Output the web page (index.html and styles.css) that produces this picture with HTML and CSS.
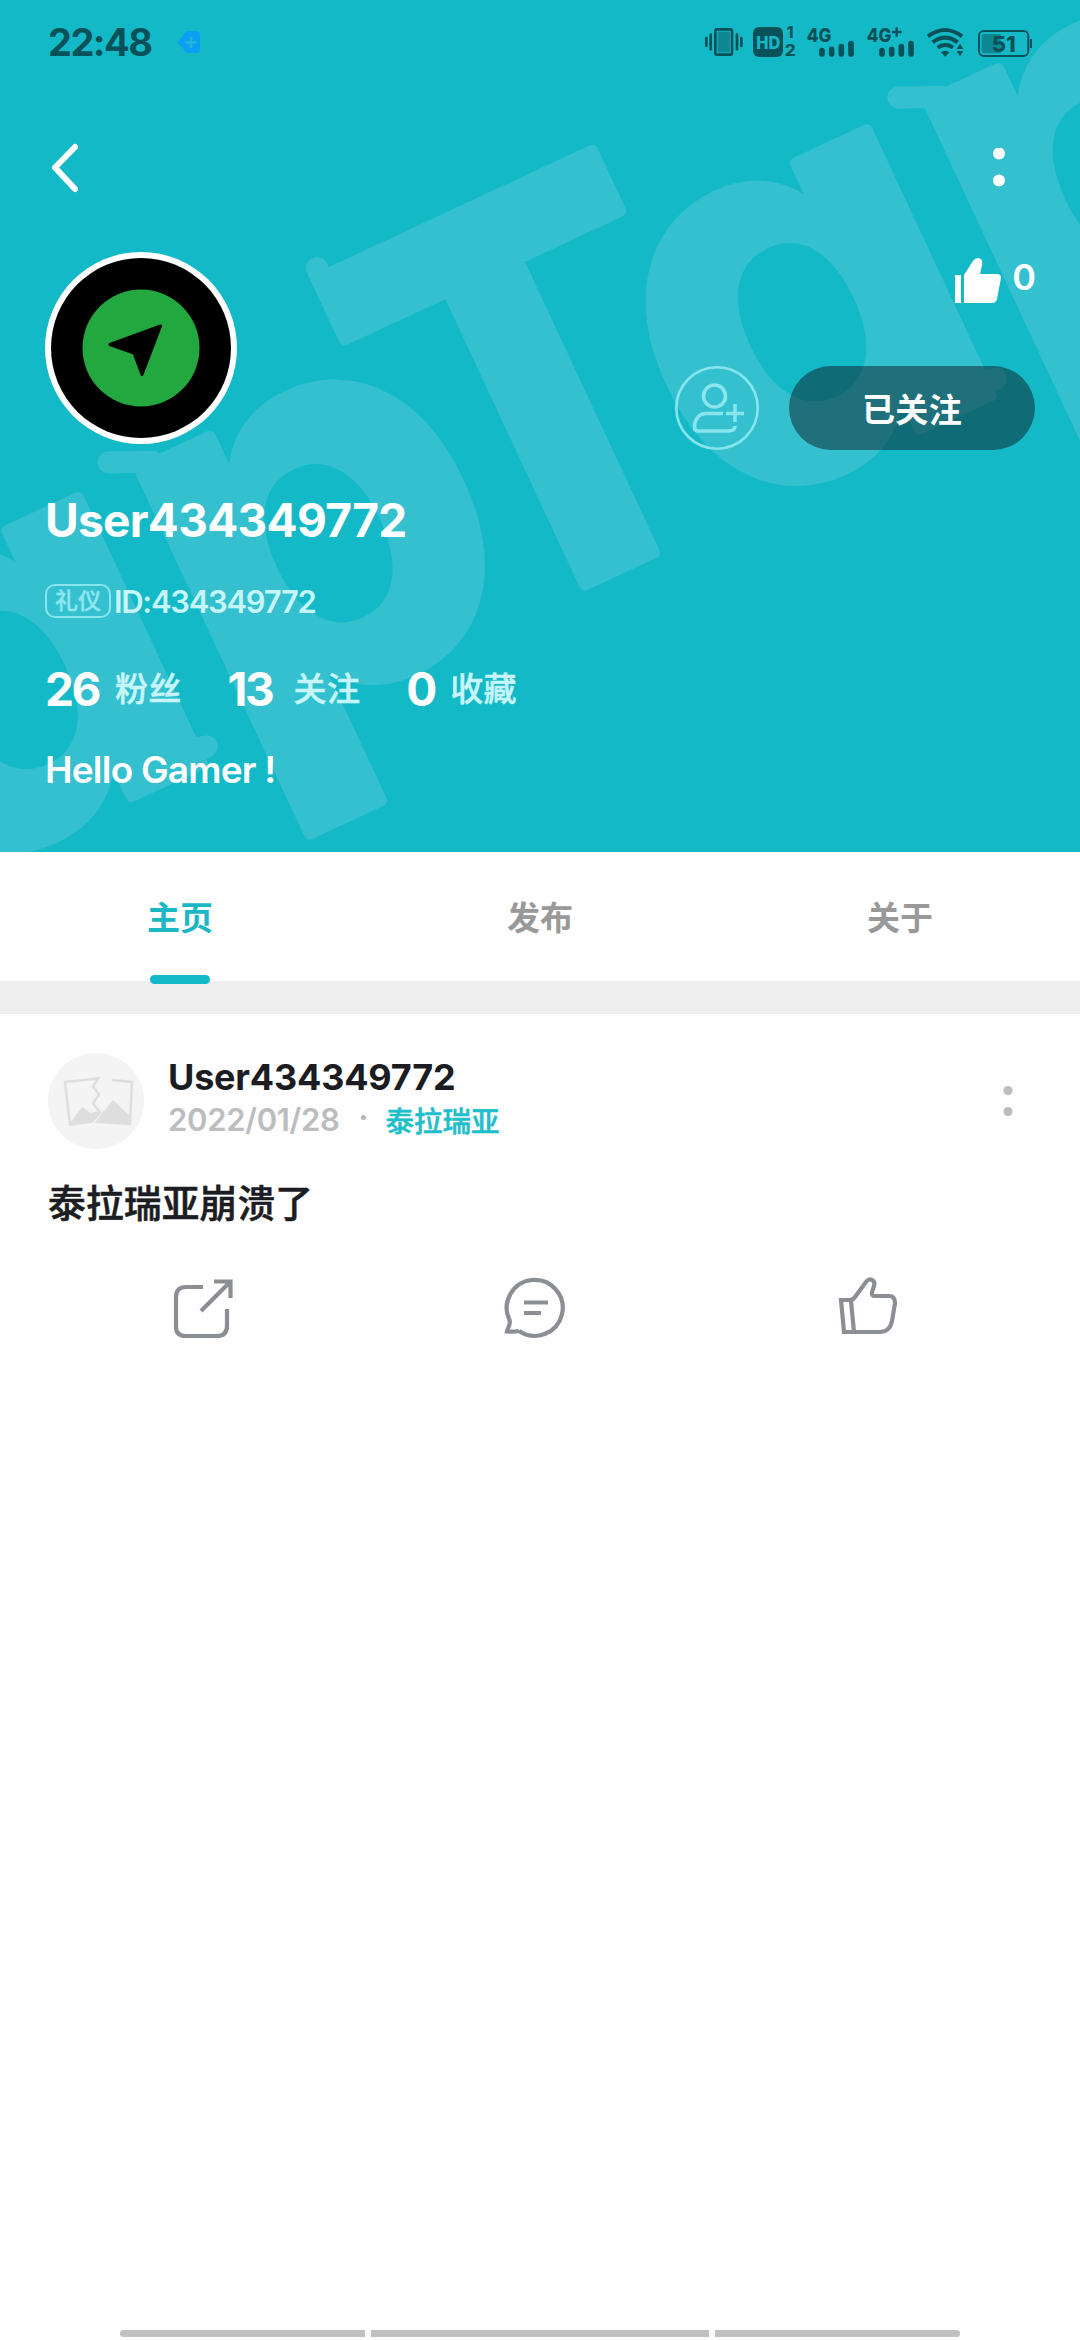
FILE: index.html
```html
<!DOCTYPE html>
<html lang="zh-CN">
<head>
<meta charset="utf-8">
<title>User434349772</title>
<link rel="stylesheet" href="styles.css">
</head>
<body>
<div class="screen">
  <header class="profile">
    <svg class="watermark" viewBox="0 0 1080 852" aria-hidden="true">
      <g transform="rotate(-25)">
        <text y="777" x="-444">a</text>
        <text y="777" x="-105">p</text>
        <text y="777" x="150" transform="translate(7 0) scale(.955 1)">T</text>
        <text y="777" x="426">a</text>
        <text y="777" x="765">p</text>
        <path class="swash" d="M174 377V440M200 398l-26 20M-97 465l40 18M773 468l40 18M-166 730q8 26 38 34h-50M704 730q8 26 38 34h-50"/>
      </g>
    </svg>
    <div class="statusbar">
      <span class="clock">22:48</span>
      <svg class="badge" width="22" height="22" viewBox="0 0 22 22"><path d="M9 0h9a4 4 0 0 1 4 4v14a4 4 0 0 1-4 4H9L1 13q-2-2 0-4z" fill="#0a9ff2"/><path d="M13 6v11M7.500 11.500h11" stroke="#25b6cf" stroke-width="2.600"/></svg>
      <div class="status-icons">
        <svg width="38" height="32" viewBox="75 78 114 96"><rect x="106" y="88" width="50" height="76" rx="5" fill="#14b9c8" stroke="#075158" stroke-width="8"/><rect x="113" y="95" width="36" height="62" fill="#0d8791"/><path d="M79 114v24M92 104v44M171 104v44M184 114v24" stroke="#075158" stroke-width="8" stroke-linecap="round"/></svg>
        <svg width="44" height="32" viewBox="219 78 132 96"><rect x="219" y="81" width="90" height="90" rx="18" fill="#075158"/><text x="229" y="146" class="st hd" textLength="72" lengthAdjust="spacingAndGlyphs">HD</text><text x="320" y="114" class="st" font-size="46">1</text><text x="314" y="168" class="st" font-size="46" textLength="33" lengthAdjust="spacingAndGlyphs">2</text></svg>
        <svg width="50" height="32" viewBox="381 78 150 96"><text x="380" y="125" class="st" font-size="58" textLength="74" lengthAdjust="spacingAndGlyphs">4G</text><path d="M426 152v10M455 148v14M484 140v22M513 131v31" class="bars"/></svg>
        <svg width="50" height="32" viewBox="561 78 150 96"><text x="560" y="125" class="st" font-size="58" textLength="74" lengthAdjust="spacingAndGlyphs">4G</text><path d="M650 82v28M636 96h29" stroke="#075158" stroke-width="7"/><path d="M606 152v10M635 148v14M664 140v22M693 131v31" class="bars"/></svg>
        <svg width="41" height="32" viewBox="741 78 123 96"><path d="M744 109q51-38 102 0M758 127q37-28 75 0M773 143q23-17 46 0" fill="none" stroke="#075158" stroke-width="12"/><path d="M783 157q12-9 25 0l-12 13zM830 147l10-16 10 16zM830 153l10 16 10-16z" fill="#075158"/></svg>
        <svg width="57" height="32" viewBox="894 78 171 96"><rect x="897" y="93" width="148" height="75" rx="15" fill="none" stroke="#075158" stroke-width="6"/><path d="M915 102h47v58h-47q-10 0-10-10v-38q0-10 10-10z" fill="#0d8791"/><path d="M1053 117v27" stroke="#075158" stroke-width="6"/><text x="935" y="155" class="st" font-size="66" textLength="72" lengthAdjust="spacingAndGlyphs">51</text></svg>
      </div>
    </div>
    <nav class="topnav">
      <svg width="30" height="50" viewBox="0 0 30 50"><path d="M27 4 7 24.500 27 46" fill="none" stroke="#fff" stroke-width="6" stroke-linecap="round" stroke-linejoin="round"/></svg>
      <svg width="12" height="40" viewBox="0 0 12 40"><circle cx="6" cy="5.500" r="6"/><circle cx="6" cy="32.500" r="6"/></svg>
    </nav>
    <div class="identity">
      <svg class="avatar" width="192" height="192" viewBox="0 0 192 192"><circle cx="96" cy="96" r="96" fill="#fff"/><circle cx="96" cy="96" r="90" fill="#000"/><circle cx="96" cy="96" r="58.500" fill="#22a83f"/><path d="M65 92.500 115.500 74 97 122.500 89 101z" stroke="#000" stroke-width="3" stroke-linejoin="round"/></svg>
      <div class="actions">
        <div class="likes">
          <svg width="46" height="46" viewBox="0 0 46 46"><path d="M0 17h6v28H0zM9 17 18 3q2-3 5-3c4 0 5 4 4 7l-2 9h17q4 0 4 4l-4 21q-1 4-5 4H9z"/></svg>
          <span>0</span>
        </div>
        <div class="buttons">
          <svg width="84" height="84" viewBox="0 0 84 84" fill="none" stroke="#88e5ee"><circle cx="42" cy="42" r="40.700" stroke-width="2.600"/><g stroke-width="3.600"><circle cx="39.500" cy="30" r="11"/><path d="M48 47.500H31C23 47.500 19.500 55 19.500 61q0 4 4 4H53q7 0 7-5"/><path d="M60 38v18M51 47.500h18"/></g></svg>
          <button class="follow">已关注</button>
        </div>
      </div>
    </div>
    <h1 class="name">User434349772</h1>
    <div class="idrow"><span class="tag">礼仪</span><span class="uid">ID:434349772</span></div>
    <div class="stats">
      <div class="stat"><b class="n26">26</b><span>粉丝</span></div>
      <div class="stat"><b class="n13">13</b><span>关注</span></div>
      <div class="stat"><b class="n0">0</b><span>收藏</span></div>
    </div>
    <p class="bio">Hello Gamer !</p>
  </header>
  <div class="tabs">
    <div class="tab active">主页</div>
    <div class="tab">发布</div>
    <div class="tab">关于</div>
  </div>
  <div class="divider"></div>
  <article class="post">
    <div class="post-head">
      <svg class="thumb" width="96" height="96" viewBox="0 0 96 96"><circle cx="48" cy="48" r="48" fill="#f4f4f4"/><path d="M17 29 50 25.500l-5 8 6 8-6 9 7 9-8 9-22 3z" fill="none" stroke="#dedede" stroke-width="2.500"/><path d="M22 70 34 54l8 6 10-2-8 10zM49 69l10-15 6-7 17 16v8z" fill="#dedede"/><path d="M64 27l20 2-2 42-33-2 8-11" fill="none" stroke="#dedede" stroke-width="2.500"/></svg>
      <div class="author">
        <div class="author-name">User434349772</div>
        <div class="meta"><span class="date">2022/01/28</span><i class="sep"></i><a class="game">泰拉瑞亚</a></div>
      </div>
      <svg class="more" width="10" height="32" viewBox="0 0 10 32"><circle cx="5" cy="5.500" r="4.600"/><circle cx="5" cy="26.500" r="4.600"/></svg>
    </div>
    <p class="body">泰拉瑞亚崩溃了</p>
    <div class="post-actions">
      <svg width="60" height="60" viewBox="0 0 60 60"><path d="M30 11H13Q3 11 3 21v30Q3 60 13 60H44Q54 60 54 50V33M41 5.500H57.500V22M57 6 28 35"/></svg>
      <svg width="62" height="62" viewBox="3 0 62 62"><path d="M17 55A28 28 0 1 0 7.500 44C9 48 6 51 5 55.500Q12 56 17 55M22 26.500h24M22 37h17"/></svg>
      <svg width="60" height="60" viewBox="0 0 60 60"><path d="M3 24H12Q15 24 17 21L28 6C31 1 38 4 36 10L34 16Q33 20 37 20H51Q57 20 57 27L54 45Q52 56 41 56H6zM13 25l3 31"/></svg>
    </div>
  </article>
  <footer class="gesture"><i></i><i class="mid"></i><i></i></footer>
</div>
</body>
</html>
```
FILE: styles.css
```css
* { box-sizing: border-box; margin: 0; padding: 0; }
body { background: #fefefe; font-family: Inter, "Noto Sans CJK SC", sans-serif; }
.screen { width: 1080px; height: 2340px; display: flex; flex-direction: column; overflow: hidden; }
svg { display: block; flex: none; }

.profile { position: relative; height: 852px; background: #14b9c8; color: #fff; overflow: hidden; isolation: isolate; }
.watermark { position: absolute; inset: 0; z-index: -1; width: 1080px; height: 852px; }
.watermark text { font: 700 536px Inter, sans-serif; font-feature-settings: "cv11"; fill: #34c0cf; stroke: #34c0cf; stroke-width: 12; stroke-linejoin: round; }
.swash { fill: none; stroke: #34c0cf; stroke-width: 22; stroke-linecap: round; stroke-linejoin: round; }

.statusbar { display: flex; align-items: center; height: 84px; padding: 0 45px 0 48px; }
.clock { color: #075158; font-size: 38px; font-weight: 700; width: 130px; letter-spacing: -1.5px; }
.status-icons { margin-left: auto; display: flex; gap: 10px; }
.st { font-family: Inter, sans-serif; font-weight: 800; fill: #075158; }
.hd { font-size: 50px; fill: #14b9c8; }
.bars { fill: none; stroke: #075158; stroke-width: 17; stroke-linecap: round; }

.topnav { display: flex; justify-content: space-between; align-items: center; height: 168px; padding: 0 75px 0 48px; }
.topnav circle, .likes svg { fill: #fff; }

.identity { display: flex; justify-content: space-between; height: 198px; padding: 0 45px; }
.actions { display: flex; flex-direction: column; justify-content: space-between; align-items: flex-end; padding-top: 6px; }
.likes { display: flex; gap: 11px; font-size: 36px; font-weight: 600; line-height: 38px; letter-spacing: -1px; }
.buttons { display: flex; gap: 30px; }
.follow { width: 246px; height: 84px; border: 0; border-radius: 42px; background: rgba(9, 31, 38, .5); color: #fff; font: 700 33px "Noto Sans CJK SC", sans-serif; letter-spacing: .3px; }

.name { height: 56px; line-height: 54px; margin: 43px 45px 0; font-size: 46px; font-weight: 700; letter-spacing: -.7px; }
.idrow { display: flex; align-items: center; gap: 3px; height: 34px; margin: 35px 45px 0; }
.tag { width: 66px; height: 34px; border: 2px solid #88e5ee; border-radius: 10px; color: #8ee6ef; font-size: 23px; font-weight: 500; -webkit-text-stroke: .4px; line-height: 31px; text-align: center; }
.uid { font-size: 31px; font-weight: 600; color: #c6f6fb; letter-spacing: -1.300px; }
.stats { display: flex; height: 50px; margin: 46px 45px 0; line-height: 50px; }
.stat { display: flex; }
.stat b { font-size: 46px; font-weight: 700; letter-spacing: -2.500px; }
.stat span { font-size: 33px; font-weight: 500; color: #c6f6fb; -webkit-text-stroke: .5px; letter-spacing: .3px; }
.n26 { width: 70px; }
.stat .n13 { width: 66px; }
.stat .n0 { width: 44px; }
.stat + .stat { margin-left: 46px; }
.bio { height: 46px; line-height: 46px; margin: 33px 45px 0; font-size: 37px; font-weight: 600; letter-spacing: -.8px; }

.tabs { display: grid; grid-template: 129px / repeat(3, 1fr); background: #fff; }
.tab { position: relative; text-align: center; font-size: 33px; font-weight: 700; line-height: 133px; color: #999; }
.active { color: #1bb7c5; }
.active::after { content: ""; position: absolute; left: 150px; bottom: -3px; width: 60px; height: 9px; border-radius: 5px; background: #14b9c8; z-index: 1; }
.divider { height: 33px; background: #eee; }

.post { padding: 39px 48px 0; flex: 1; }
.post-head { display: flex; align-items: center; height: 96px; }
.author { margin-left: 24px; padding-bottom: 7px; flex: 1; }
.author-name { font-size: 36px; font-weight: 700; line-height: 44px; color: #1c1d22; letter-spacing: -.2px; }
.meta { display: flex; align-items: center; height: 42px; }
.date { font-size: 31px; font-weight: 600; color: #bbbdbf; letter-spacing: -.3px; }
.sep { width: 5px; height: 5px; border-radius: 50%; background: #b4b6b8; margin: 0 20px 4px 21px; }
.game { font-size: 28.5px; font-weight: 500; color: #1fbecb; -webkit-text-stroke: .5px; }
.more { margin-right: 19px; fill: #bdbdbd; }
.body { margin-top: 26px; height: 56px; line-height: 56px; font-size: 37.700px; font-weight: 500; color: #1c1d22; -webkit-text-stroke: .6px; letter-spacing: .2px; }
.post-actions { display: flex; justify-content: space-between; height: 62px; margin: 45px 134px 0 125px; }
.post-actions svg { fill: none; stroke: #8b8f94; stroke-width: 4.200; overflow: visible; }

.gesture { display: grid; grid-template-columns: 245px 338px 245px; gap: 6px; height: 10px; padding: 0 120px; }
.gesture i { height: 7px; background: #c1c1c1; border-radius: 4px 0 0 4px; }
.gesture .mid { border-radius: 0; }
.gesture i:last-child { border-radius: 0 4px 4px 0; }
```
